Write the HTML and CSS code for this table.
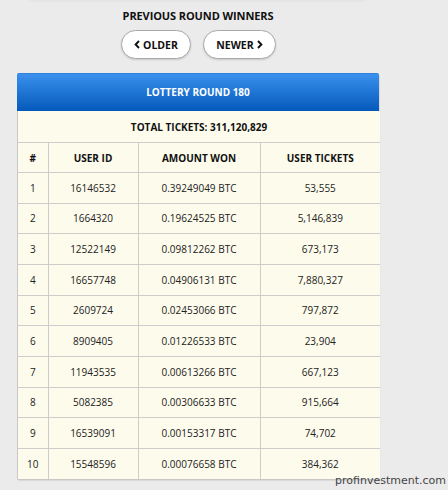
FILE: index.html
```html
<!DOCTYPE html>
<html>
<head>
<meta charset="utf-8">
<link rel="stylesheet" href="styles.css">
</head>
<body>
<div class="topbar"></div>
<div class="wrap">
  <h2 class="title">PREVIOUS ROUND WINNERS</h2>
  <div class="nav">
    <button class="btn older"><svg class="chev" viewBox="0 0 6 9" width="6" height="9"><path d="M5 1 L1.6 4.5 L5 8" fill="none" stroke="#111" stroke-width="1.9"/></svg>OLDER</button>
    <button class="btn newer">NEWER<svg class="chev" viewBox="0 0 6 9" width="6" height="9"><path d="M1 1 L4.4 4.5 L1 8" fill="none" stroke="#111" stroke-width="1.9"/></svg></button>
  </div>
  <div class="card">
    <div class="head">LOTTERY ROUND 180</div>
    <table class="grid">
      <colgroup><col class="c1"><col class="c2"><col class="c3"><col class="c4"></colgroup>
      <tr class="total"><td colspan="4">TOTAL TICKETS: 311,120,829</td></tr>
      <tr class="cols"><th>#</th><th>USER ID</th><th>AMOUNT WON</th><th>USER TICKETS</th></tr>
      <tr><td>1</td><td>16146532</td><td class="amt">0.39249049 BTC</td><td>53,555</td></tr>
      <tr><td>2</td><td>1664320</td><td class="amt">0.19624525 BTC</td><td>5,146,839</td></tr>
      <tr><td>3</td><td>12522149</td><td class="amt">0.09812262 BTC</td><td>673,173</td></tr>
      <tr><td>4</td><td>16657748</td><td class="amt">0.04906131 BTC</td><td>7,880,327</td></tr>
      <tr><td>5</td><td>2609724</td><td class="amt">0.02453066 BTC</td><td>797,872</td></tr>
      <tr><td>6</td><td>8909405</td><td class="amt">0.01226533 BTC</td><td>23,904</td></tr>
      <tr><td>7</td><td>11943535</td><td class="amt">0.00613266 BTC</td><td>667,123</td></tr>
      <tr><td>8</td><td>5082385</td><td class="amt">0.00306633 BTC</td><td>915,664</td></tr>
      <tr><td>9</td><td>16539091</td><td class="amt">0.00153317 BTC</td><td>74,702</td></tr>
      <tr><td>10</td><td>15548596</td><td class="amt">0.00076658 BTC</td><td>384,362</td></tr>
    </table>
  </div>
</div>
<div class="mark">profinvestment.com</div>
</body>
</html>
```
FILE: styles.css
```css
html, body {
  margin: 0;
  padding: 0;
  background: #ebebeb;
  font-family: "Open Sans", "Liberation Sans", sans-serif;
  color: #222;
  height: 490px;
  overflow: hidden;
}
.topbar {
  position: absolute;
  left: 25px;
  top: -8px;
  width: 345px;
  height: 8px;
  border-radius: 0 0 14px 14px;
  box-shadow: 0 1px 3px rgba(0,0,0,0.05);
  background: #ebebeb;
}
.wrap {
  width: 362px;
  margin-left: 17px;
  padding-top: 8px;
}
.title {
  margin: 0;
  text-align: center;
  font-size: 11px;
  font-weight: 700;
  line-height: 15px;
  color: #111;
  letter-spacing: -0.1px;
}
.nav {
  display: flex;
  justify-content: center;
  gap: 12px;
  margin-top: 7px;
  margin-left: 1px;
}
.btn {
  display: flex;
  align-items: center;
  justify-content: center;
  gap: 3px;
  white-space: nowrap;
  height: 29px;
  padding: 0;
  border: 1px solid #a9a9a9;
  border-radius: 15px;
  background: #fff;
  box-shadow: 0 1px 2px rgba(0,0,0,0.15);
  font-family: "Open Sans", "Liberation Sans", sans-serif;
  font-size: 10.5px;
  font-weight: 700;
  color: #111;
}
.older { width: 70px; }
.newer { width: 73px; }
.chev { display: block; }
.card {
  margin-top: 14px;
  border: 1px solid #c8c8c8;
  border-radius: 3px 3px 0 0;
  box-shadow: 1px 1px 1px rgba(0,0,0,0.08);
}
.head {
  height: 37px;
  line-height: 37px;
  text-align: center;
  color: #fff;
  font-size: 10px;
  font-weight: 700;
  background: linear-gradient(#3a90ec, #0459ba);
  border-radius: 2px 2px 0 0;
  margin: -1px -1px 0 -1px;
  border-top: 1px solid #2f80d8;
}
.grid {
  width: 100%;
  border-collapse: collapse;
  background: #fdfbec;
  table-layout: fixed;
}
.c1 { width: 30px; }
.c2 { width: 90px; }
.c3 { width: 122px; }
.c4 { width: 120px; }
.grid td, .grid th {
  border: 1px solid #cdcdcd;
  text-align: center;
  font-size: 10px;
  padding: 0;
  height: 29.67px;
  color: #222;
}
.grid tr > :first-child { border-left: none; }
.grid tr > :last-child { border-right: none; }
.grid tr:last-child td { border-bottom: none; }
.grid .total td {
  border-top: none;
  height: 31px;
  font-weight: 700;
  color: #111;
}
.grid th {
  font-weight: 700;
  color: #111;
  height: 29px;
}
.grid td.amt {
  text-align: left;
  padding-left: 23px;
}
.mark {
  position: absolute;
  left: 335px;
  top: 474px;
  font-family: "DejaVu Sans", sans-serif;
  font-size: 11px;
  color: #444;
}
```
